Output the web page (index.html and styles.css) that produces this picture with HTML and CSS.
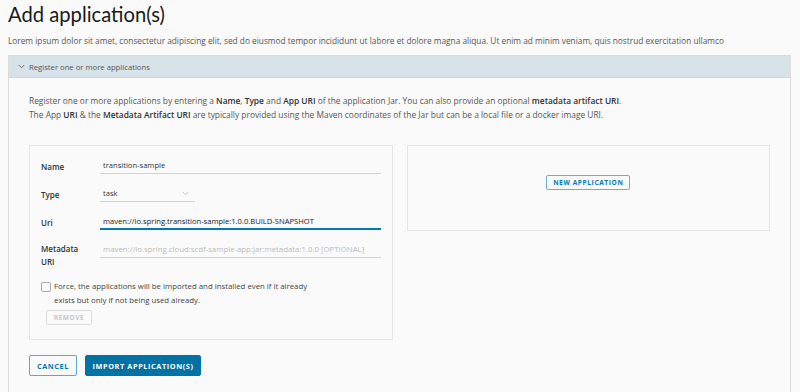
FILE: index.html
```html
<!DOCTYPE html>
<html lang="en">
<head>
    <meta charset="UTF-8">
    <title>Add application(s)</title>
    <link rel="stylesheet" href="styles.css">
</head>
<body>
<div class="page">
    <h1 class="title">Add application(s)</h1>
    <p class="lead">Lorem ipsum dolor sit amet, consectetur adipiscing elit, sed do eiusmod tempor incididunt ut labore et dolore magna aliqua. Ut enim ad minim veniam, quis nostrud exercitation ullamco</p>

    <div class="panel">
        <div class="panel-head">
            <svg class="chev" width="7" height="5" viewBox="0 0 7 5"><polyline points="0.8,1 3.5,3.8 6.2,1" fill="none" stroke="#666" stroke-width="0.9"/></svg>
            <span>Register one or more applications</span>
        </div>
        <div class="panel-body">
            <p class="intro">Register one or more applications by entering a <b>Name</b>, <b>Type</b> and <b>App URI</b> of the application Jar. You can also provide an optional <b>metadata artifact URI</b>.<br>
            The App <b>URI</b> &amp; the <b>Metadata Artifact URI</b> are typically provided using the Maven coordinates of the Jar but can be a local file or a docker image URI.</p>

            <div class="cards">
                <div class="card form-card">
                    <div class="row">
                        <label class="lbl">Name</label>
                        <div class="field">transition-sample</div>
                    </div>
                    <div class="row">
                        <label class="lbl">Type</label>
                        <div class="field select">task
                            <svg class="sel-chev" width="7" height="5" viewBox="0 0 7 5"><polyline points="0.8,1 3.5,3.8 6.2,1" fill="none" stroke="#bbb" stroke-width="0.8"/></svg>
                        </div>
                    </div>
                    <div class="row">
                        <label class="lbl">Uri</label>
                        <div class="field focus">maven://io.spring.transition-sample:1.0.0.BUILD-SNAPSHOT</div>
                    </div>
                    <div class="row row-top">
                        <label class="lbl">Metadata<br>URI</label>
                        <div class="field placeholder">maven://io.spring.cloud:scdf-sample-app:jar:metadata:1.0.0 [OPTIONAL]</div>
                    </div>
                    <div class="check">
                        <span class="box"></span>
                        <span class="check-text">Force, the applications will be imported and installed even if it already<br>exists but only if not being used already.</span>
                    </div>
                    <button class="btn btn-disabled">REMOVE</button>
                </div>
                <div class="card add-card">
                    <button class="btn btn-outline btn-sm">NEW APPLICATION</button>
                </div>
            </div>

            <div class="actions">
                <button class="btn btn-outline">CANCEL</button>
                <button class="btn btn-primary">IMPORT APPLICATION(S)</button>
            </div>
        </div>
    </div>
</div>
</body>
</html>
```

FILE: styles.css
```css
*{
    padding:0;
    margin:0;
    box-sizing:border-box;
}

html, body{
    background:#fafafa;
    height:100%;
}

body{
    font-family:"Open Sans", "Liberation Sans", sans-serif;
    color:#565656;
    overflow:hidden;
}

.page{
    padding:0 9px 0 8px;
}

.title{
    font-family:Lato, "Liberation Sans", sans-serif;
    font-weight:400;
    font-size:20.2px;
    line-height:28px;
    color:#1a1a1a;
}

.lead{
    font-size:8.3px;
    line-height:12px;
    margin-top:7px;
}

.panel{
    margin-top:8px;
    border:1px solid #dcdcdc;
    border-bottom:none;
    height:400px;
}

.panel-head{
    height:22px;
    background:#d8e3e9;
    border-bottom:1px solid #ccd6dc;
    display:flex;
    align-items:center;
    padding-left:9px;
    font-size:7.7px;
    color:#565656;
}

.chev{
    margin-right:4px;
}

.panel-body{
    padding:16px 20px 0 20px;
}

.intro{
    font-size:8.4px;
    line-height:14px;
}

.intro b{
    font-weight:600;
    color:#333;
}

.cards{
    display:grid;
    grid-template-columns:1fr 1fr;
    gap:14px;
    align-items:start;
    margin-top:23px;
}

.card{
    border:1px solid #e4e4e4;
    background:#fafafa;
}

.form-card{
    padding:12px 11px 14px 11px;
}

.row{
    display:grid;
    grid-template-columns:59px 1fr;
    align-items:center;
    height:28px;
    align-content:start;
}

.row-top{
    align-items:start;
    height:auto;
}

.lbl{
    font-size:8px;
    font-weight:600;
    color:#333;
    line-height:13px;
}

.field{
    height:16px;
    line-height:15px;
    font-size:7.6px;
    color:#333;
    border-bottom:1px solid #d2d2d2;
    padding-left:3px;
    position:relative;
    white-space:nowrap;
    overflow:hidden;
}

.field.select{
    width:95px;
}

.sel-chev{
    position:absolute;
    right:6px;
    top:5px;
}

.field.focus{
    border-bottom:2px solid #0079b8;
    color:#222;
}

.field.placeholder{
    font-size:7.8px;
    color:#bbb;
}

.check{
    display:flex;
    align-items:flex-start;
    margin-top:11px;
}

.box{
    width:10px;
    height:10px;
    border:1px solid #aaa;
    border-radius:2px;
    background:#fff;
    margin-top:3px;
    margin-right:3px;
    flex:none;
}

.check-text{
    font-size:7.8px;
    line-height:14px;
    color:#444;
}

.btn{
    font-family:"Open Sans", "Liberation Sans", sans-serif;
    font-weight:700;
    letter-spacing:0.6px;
    border-radius:2px;
    background:transparent;
    cursor:pointer;
}

.btn-disabled{
    display:block;
    margin:3px 0 0 5px;
    width:46px;
    height:15px;
    font-size:6.5px;
    border:1px solid #ddd;
    color:#c8c8c8;
}

.add-card{
    height:86px;
    padding-top:29px;
    display:flex;
    justify-content:center;
    align-items:flex-start;
}

.btn-outline{
    border:1px solid #0079b8;
    color:#0079b8;
}

.btn-sm{
    width:84px;
    height:15px;
    font-size:6.6px;
    border-color:#6aaed0;
}

.actions{
    display:flex;
    gap:8px;
    margin-top:15px;
}

.actions .btn{
    height:21px;
    font-size:7.3px;
}

.actions .btn-outline{
    width:48px;
    border-color:#5fa6cb;
}

.btn-primary{
    width:116px;
    border:1px solid #0072a3;
    background:#0072a3;
    color:#fff;
}
```
